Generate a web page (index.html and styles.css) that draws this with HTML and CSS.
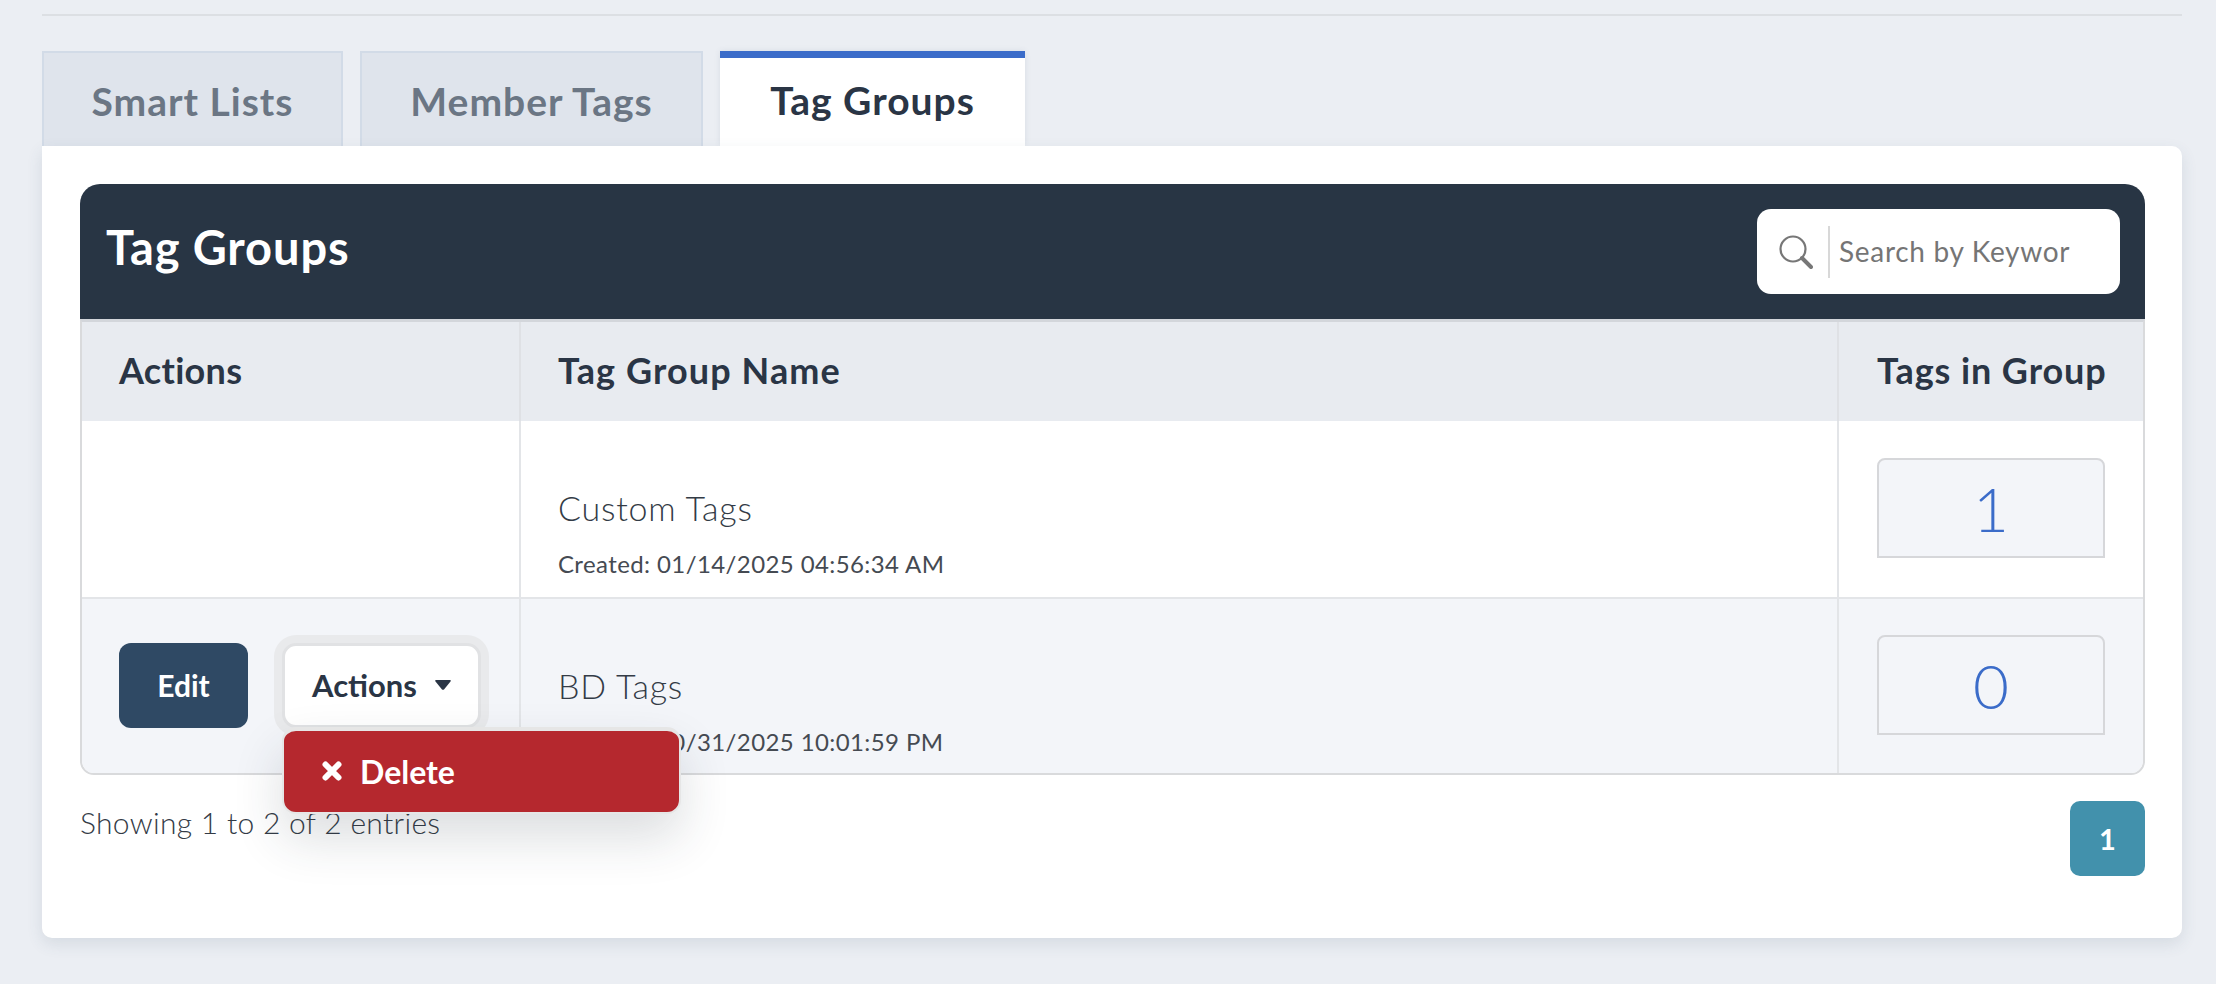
FILE: index.html
```html
<!DOCTYPE html>
<html lang="en">
<head>
    <meta charset="UTF-8">
    <title>Tag Groups</title>
    <link rel="stylesheet" href="styles.css">
</head>
<body>
    <div class="page">
        <hr class="divider">
        <div class="tabs">
            <div class="tab">Smart Lists</div>
            <div class="tab">Member Tags</div>
            <div class="tab active">Tag Groups</div>
        </div>
        <div class="card">
            <div class="panel-head">
                <h1>Tag Groups</h1>
                <div class="search">
                    <svg class="search-icon" width="34" height="34" viewBox="0 0 34 34">
                        <circle cx="14" cy="14" r="12.5" fill="none" stroke="#777" stroke-width="2.2"/>
                        <path d="M23 23L32 32" stroke="#777" stroke-width="4" stroke-linecap="round"/>
                    </svg>
                    <input type="text" placeholder="Search by Keywor">
                </div>
            </div>
            <div class="table-wrap">
                <table>
                    <colgroup>
                        <col class="col-actions">
                        <col>
                        <col class="col-count">
                    </colgroup>
                    <thead>
                        <tr>
                            <th>Actions</th>
                            <th>Tag Group Name</th>
                            <th>Tags in Group</th>
                        </tr>
                    </thead>
                    <tbody>
                        <tr>
                            <td></td>
                            <td class="name-cell">
                                <div class="name">Custom Tags</div>
                                <div class="created">Created: 01/14/2025 04:56:34 AM</div>
                            </td>
                            <td><div class="count">1</div></td>
                        </tr>
                        <tr class="alt">
                            <td>
                                <div class="row-actions">
                                    <button class="btn-edit">Edit</button>
                                    <div class="dropdown">
                                        <button class="btn-actions">Actions
                                            <svg width="16" height="10" viewBox="0 0 16 10"><path d="M1 0H15C16 0 16 1 15.500 1.600L9 9.400C8.500 10 7.500 10 7 9.400L.5 1.600C0 1 0 0 1 0Z" fill="#2a3545"/></svg>
                                        </button>
                                        <div class="menu">
                                            <svg width="20" height="20" viewBox="0 0 20 20"><path d="M3.500 3.500L16.500 16.500M16.500 3.500L3.500 16.500" stroke="#fff" stroke-width="6" stroke-linecap="round"/></svg>
                                            Delete
                                        </div>
                                    </div>
                                </div>
                            </td>
                            <td class="name-cell">
                                <div class="name">BD Tags</div>
                                <div class="created">Created: 10/31/2025 10:01:59 PM</div>
                            </td>
                            <td><div class="count">0</div></td>
                        </tr>
                    </tbody>
                </table>
            </div>
            <div class="panel-foot">
                <span class="entries">Showing 1 to 2 of 2 entries</span>
                <span class="page-btn">1</span>
            </div>
        </div>
    </div>
</body>
</html>
```

FILE: styles.css
```css
body {
    margin: 0;
    background: #ebeef3;
    font-family: Lato, "Open Sans", sans-serif;
    color: #2a3545;
    height: 984px;
    overflow: hidden;
}
.page {
    padding: 14px 34px 0 42px;
}
.divider {
    margin: 0 0 35px;
    border: none;
    border-top: 2px solid #dcdfe3;
}
.tabs {
    display: flex;
    gap: 17px;
    height: 95px;
}
.tab {
    box-sizing: border-box;
    width: 301px;
    display: flex;
    align-items: center;
    justify-content: center;
    padding-top: 2px;
    background: #dfe4ec;
    border: 2px solid #d2dbe7;
    border-bottom: none;
    color: #6b7684;
    font-size: 39px;
    font-weight: 700;
    letter-spacing: 1px;
}
.tab:nth-child(2) {
    width: 343px;
}
.tab.active {
    width: 305px;
    padding: 0 0 4px;
    background: #fff;
    border: none;
    border-top: 7px solid #3b6cc9;
    color: #2a3545;
    box-shadow: 0 0 6px rgba(60, 80, 110, .1);
}
.card {
    height: 792px;
    box-sizing: border-box;
    padding: 38px 37px 0 38px;
    background: #fff;
    border-radius: 0 10px 10px 10px;
    box-shadow: 0 6px 16px rgba(60, 80, 110, .12);
    position: relative;
}
.panel-head {
    height: 135px;
    box-sizing: border-box;
    padding: 0 25px 0 26px;
    display: flex;
    align-items: center;
    justify-content: space-between;
    background: #283544;
    border-radius: 20px 20px 0 0;
}
.panel-head h1 {
    margin: 0 0 10px;
    color: #fff;
    font-size: 47px;
    font-weight: 700;
    letter-spacing: .9px;
}
.search {
    width: 363px;
    height: 85px;
    box-sizing: border-box;
    padding-left: 22px;
    display: flex;
    align-items: center;
    background: #fff;
    border-radius: 14px;
}
.search-icon {
    flex: none;
}
.search input {
    width: 100%;
    min-width: 0;
    height: 50px;
    margin: 0 0 0 15px;
    padding: 0 0 2px 9px;
    border: none;
    border-left: 2px solid #d8d8d8;
    outline: none;
    background: none;
    font-family: inherit;
    font-size: 28px;
    font-weight: 400;
    letter-spacing: .7px;
}
.search input::placeholder {
    color: #757575;
    opacity: 1;
}
.table-wrap {
    border: 2px solid #d9dadc;
    border-width: 3px 2px 2px;
    border-top-color: #d3d6db;
    border-radius: 0 0 14px 14px;
}
table {
    width: 100%;
    table-layout: fixed;
    border-collapse: separate;
    border-spacing: 0;
}
.col-actions {
    width: 437px;
}
.col-count {
    width: 306px;
}
th {
    box-sizing: border-box;
    height: 99px;
    padding: 0 0 4px 37px;
    text-align: left;
    background: #e8ebf0;
    border-left: 2px solid #dfe1e5;
    font-size: 36px;
    font-weight: 700;
    letter-spacing: .6px;
}
th:first-child, td:first-child {
    border-left: none;
}
th:nth-child(2) {
    letter-spacing: 1.1px;
}
th:last-child {
    padding-left: 38px;
    letter-spacing: .9px;
}
th:first-child {
    letter-spacing: .3px;
}
td {
    box-sizing: border-box;
    padding: 0;
    height: 176px;
    vertical-align: middle;
    border-left: 2px solid #e3e5e8;
}
tbody tr + tr td {
    border-top: 2px solid #e3e5e8;
}
.alt td:first-child {
    border-bottom-left-radius: 12px;
}
.alt td:last-child {
    border-bottom-right-radius: 12px;
}
.alt td {
    background: #f3f5f9;
}
.name-cell {
    padding: 68px 0 0 37px;
    vertical-align: top;
}
.name {
    font-size: 34px;
    font-weight: 300;
    line-height: 38px;
    letter-spacing: .8px;
    color: #333b46;
}
.created {
    margin-top: 22px;
    font-size: 24px;
    font-weight: 400;
    line-height: 30px;
    letter-spacing: .4px;
    color: #454a52;
}
.count {
    box-sizing: border-box;
    width: 228px;
    height: 100px;
    margin: 0 0 2px 38px;
    display: flex;
    align-items: center;
    justify-content: center;
    background: #f3f5f9;
    border: 2px solid #d6d7da;
    border-radius: 8px 8px 0 0;
    color: #3b6cc9;
    font-size: 62px;
    font-weight: 300;
}
.row-actions {
    padding-left: 37px;
    margin-bottom: 2px;
    display: flex;
    gap: 34px;
    align-items: center;
}
.btn-edit {
    width: 129px;
    height: 85px;
    border: none;
    border-radius: 12px;
    background: #2f4964;
    color: #fff;
    font-family: inherit;
    font-size: 30px;
    font-weight: 700;
}
.dropdown {
    position: relative;
}
.btn-actions {
    box-sizing: border-box;
    width: 199px;
    height: 85px;
    padding: 0;
    display: flex;
    align-items: center;
    justify-content: center;
    gap: 18px;
    background: #fff;
    border: 3px solid #e1e2e4;
    border-radius: 14px;
    box-shadow: 0 0 0 8px #e9eaec;
    color: #2a3545;
    font-family: inherit;
    font-size: 31px;
    font-weight: 700;
}
.menu {
    position: absolute;
    top: 84px;
    left: 0;
    z-index: 2;
    box-sizing: border-box;
    width: 399px;
    height: 87px;
    padding-left: 38px;
    display: flex;
    align-items: center;
    gap: 18px;
    background: #b5282e;
    border: 2px solid #e6e6e6;
    border-top-width: 4px;
    border-radius: 14px;
    box-shadow: 0 24px 50px rgba(40, 50, 60, .16);
    color: #fff;
    font-size: 32px;
    font-weight: 700;
}
.panel-foot {
    padding-top: 26px;
    display: flex;
    justify-content: space-between;
    align-items: flex-start;
}
.entries {
    margin-top: 3px;
    font-size: 30px;
    font-weight: 300;
    letter-spacing: .3px;
    color: #333b46;
}
.page-btn {
    width: 75px;
    height: 75px;
    display: flex;
    align-items: center;
    justify-content: center;
    background: #4291ac;
    border-radius: 10px;
    color: #fff;
    font-size: 29px;
    font-weight: 700;
}
```
